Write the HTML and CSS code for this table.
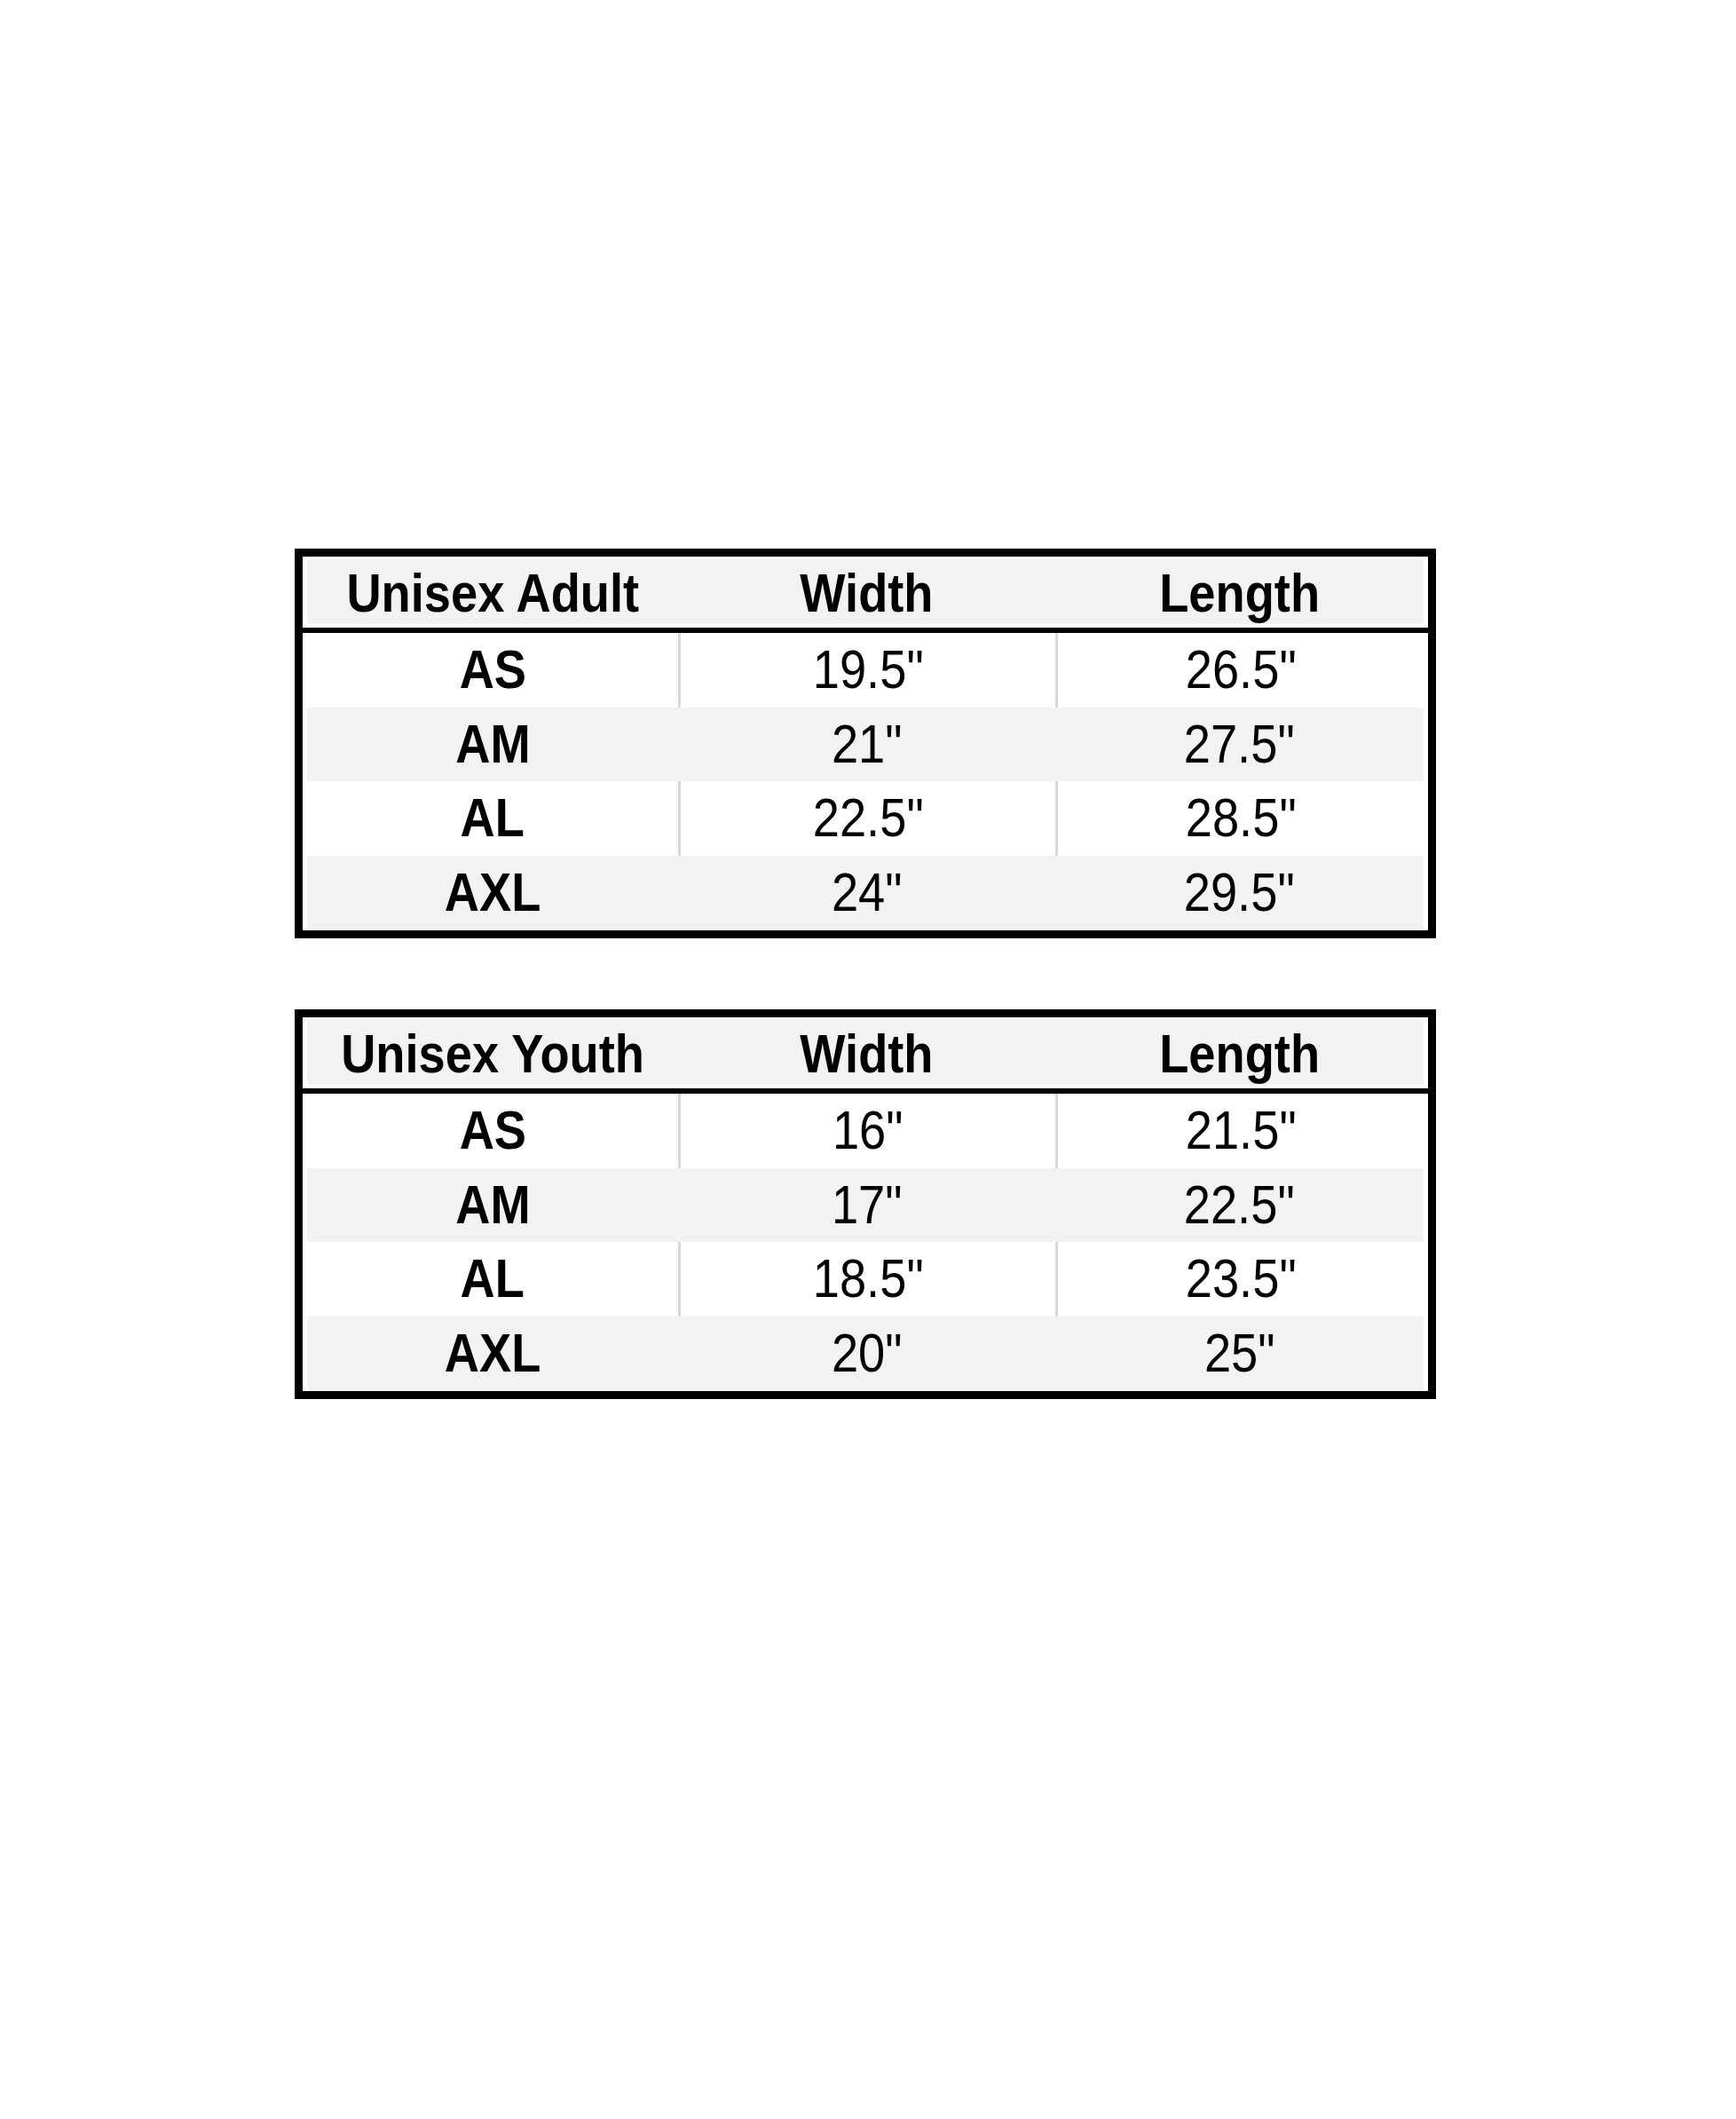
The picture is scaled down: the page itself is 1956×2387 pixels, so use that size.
FILE: index.html
```html
<!DOCTYPE html>
<html lang="en">
<head>
<meta charset="utf-8">
<title>Size Chart</title>
<link rel="stylesheet" href="styles.css">
</head>
<body>
<main class="page">
  <section class="chart">
    <div class="head">
      <div class="head-fill">
        <div class="cell"><span class="txt">Unisex Adult</span></div>
        <div class="cell"><span class="txt">Width</span></div>
        <div class="cell"><span class="txt">Length</span></div>
      </div>
    </div>
    <div class="body">
      <div class="row">
        <div class="cell size"><span class="txt">AS</span></div><div class="cell"><span class="txt">19.5"</span></div><div class="cell"><span class="txt">26.5"</span></div>
      </div>
      <div class="row alt">
        <div class="cell size"><span class="txt">AM</span></div><div class="cell"><span class="txt">21"</span></div><div class="cell"><span class="txt">27.5"</span></div>
      </div>
      <div class="row">
        <div class="cell size"><span class="txt">AL</span></div><div class="cell"><span class="txt">22.5"</span></div><div class="cell"><span class="txt">28.5"</span></div>
      </div>
      <div class="row alt">
        <div class="cell size"><span class="txt">AXL</span></div><div class="cell"><span class="txt">24"</span></div><div class="cell"><span class="txt">29.5"</span></div>
      </div>
    </div>
  </section>

  <section class="chart">
    <div class="head">
      <div class="head-fill">
        <div class="cell"><span class="txt">Unisex Youth</span></div>
        <div class="cell"><span class="txt">Width</span></div>
        <div class="cell"><span class="txt">Length</span></div>
      </div>
    </div>
    <div class="body">
      <div class="row">
        <div class="cell size"><span class="txt">AS</span></div><div class="cell"><span class="txt">16"</span></div><div class="cell"><span class="txt">21.5"</span></div>
      </div>
      <div class="row alt">
        <div class="cell size"><span class="txt">AM</span></div><div class="cell"><span class="txt">17"</span></div><div class="cell"><span class="txt">22.5"</span></div>
      </div>
      <div class="row">
        <div class="cell size"><span class="txt">AL</span></div><div class="cell"><span class="txt">18.5"</span></div><div class="cell"><span class="txt">23.5"</span></div>
      </div>
      <div class="row alt">
        <div class="cell size"><span class="txt">AXL</span></div><div class="cell"><span class="txt">20"</span></div><div class="cell"><span class="txt">25"</span></div>
      </div>
    </div>
  </section>
</main>
</body>
</html>
```

FILE: styles.css
```css
html, body {
  margin: 0;
  padding: 0;
  background: #ffffff;
}

body {
  font-family: "Liberation Sans", Arial, sans-serif;
  color: #000000;
}

.page {
  display: flex;
  flex-direction: column;
  gap: 80px;
  padding: 618px 0 0 332px;
}

.chart {
  width: 1268px;
  border: 9px solid #000000;
  background: #ffffff;
}

.head {
  padding: 3px 5px 4px;
  border-bottom: 6px solid #000000;
}

.head-fill {
  display: grid;
  grid-template-columns: 418px 425px 415px;
  height: 73px;
  background: #f2f2f2;
  font-weight: 700;
}

.head-fill .cell {
  padding-top: 4px;
}

.body {
  padding: 0 5px 1px;
}

.row {
  display: grid;
  grid-template-columns: 418px 425px 415px;
  height: 83.5px;
  background: #ffffff;
}

.row.alt {
  background: #f2f2f2;
}

.cell {
  box-sizing: border-box;
  display: flex;
  align-items: center;
  justify-content: center;
  font-size: 61px;
  line-height: 1;
}

.txt {
  display: inline-block;
  white-space: nowrap;
  transform: scaleX(0.89);
}

.row:not(.alt) .cell + .cell {
  border-left: 3px solid #d9d9d9;
}

.size {
  font-weight: 700;
}
```
